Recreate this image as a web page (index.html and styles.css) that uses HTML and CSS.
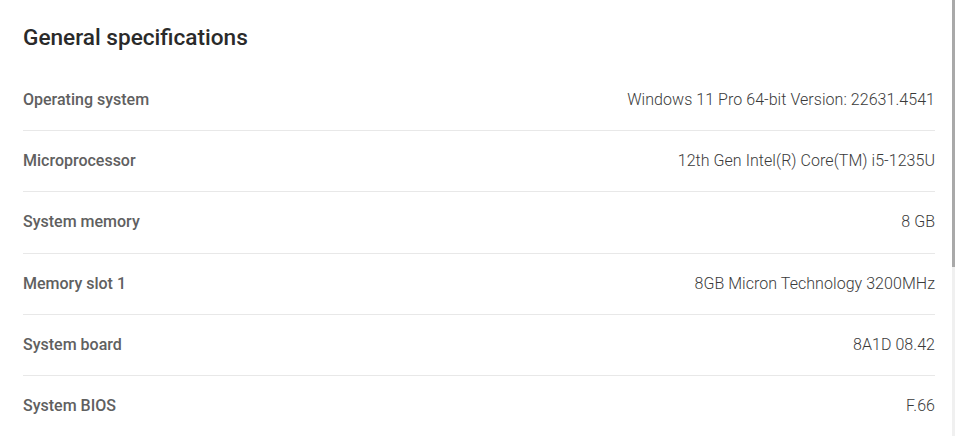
FILE: index.html
```html
<!DOCTYPE html>
<html>
<head>
    <title>General specifications</title>
<link rel="stylesheet" href="styles.css">
</head>

<body>

    <div class="spec-container">
        <h2 class="spec-header">General specifications</h2>
        <div class="spec-list">
            <div class="spec-row">
                <div class="spec-label">Operating system</div>
                <div class="spec-value">Windows 11 Pro 64-bit Version: 22631.4541</div>
            </div>
            <div class="spec-row">
                <div class="spec-label">Microprocessor</div>
                <div class="spec-value">12th Gen Intel(R) Core(TM) i5-1235U</div>
            </div>
            <div class="spec-row">
                <div class="spec-label">System memory</div>
                <div class="spec-value">8 GB</div>
            </div>
            <div class="spec-row">
                <div class="spec-label">Memory slot 1</div>
                <div class="spec-value">8GB Micron Technology 3200MHz</div>
            </div>
            <div class="spec-row">
                <div class="spec-label">System board</div>
                <div class="spec-value">8A1D 08.42</div>
            </div>
            <div class="spec-row">
                <div class="spec-label">System BIOS</div>
                <div class="spec-value">F.66</div>
            </div>
        </div>
    </div>

    <!-- scrollbar drawn over the page edge -->
    <div class="fake-scrollbar">
        <div class="fake-thumb"></div>
    </div>

</body>
</html>
```

FILE: styles.css
```css
/* General Styling */
html, body {
    height: 100%;
    overflow: hidden;
}

body {
    font-family: Roboto, "Liberation Sans", sans-serif;
    background-color: white;
    margin: 0;
    padding: 0;
    color: #333;
}

/* Container */
.spec-container {
    padding: 23px 20px 0 23px;
}

/* Header */
.spec-header {
    margin: 0;
    font-size: 22.6px;
    font-weight: 500;
    line-height: 30px;
    color: #2a2a2a;
    padding-bottom: 16.75px;
}

/* Rows */
.spec-row {
    display: flex;
    justify-content: space-between;
    align-items: center;
    padding: 20px 0;
    line-height: 20.25px;
    border-bottom: 1px solid #e8e8e8;
}

.spec-row:last-child {
    border-bottom: none;
}

.spec-label {
    font-size: 16px;
    font-weight: 500;
    color: #606060;
}

.spec-value {
    font-size: 16px;
    font-weight: 300;
    letter-spacing: 0.05px;
    color: #3a3a3a;
    text-align: right;
}

/* Scrollbar overlay */
.fake-scrollbar {
    position: fixed;
    top: 0;
    right: 0;
    width: 3px;
    height: 100%;
    background: #f0f0f0;
}

.fake-thumb {
    height: 267px;
    background: #a9a9a9;
}
```
